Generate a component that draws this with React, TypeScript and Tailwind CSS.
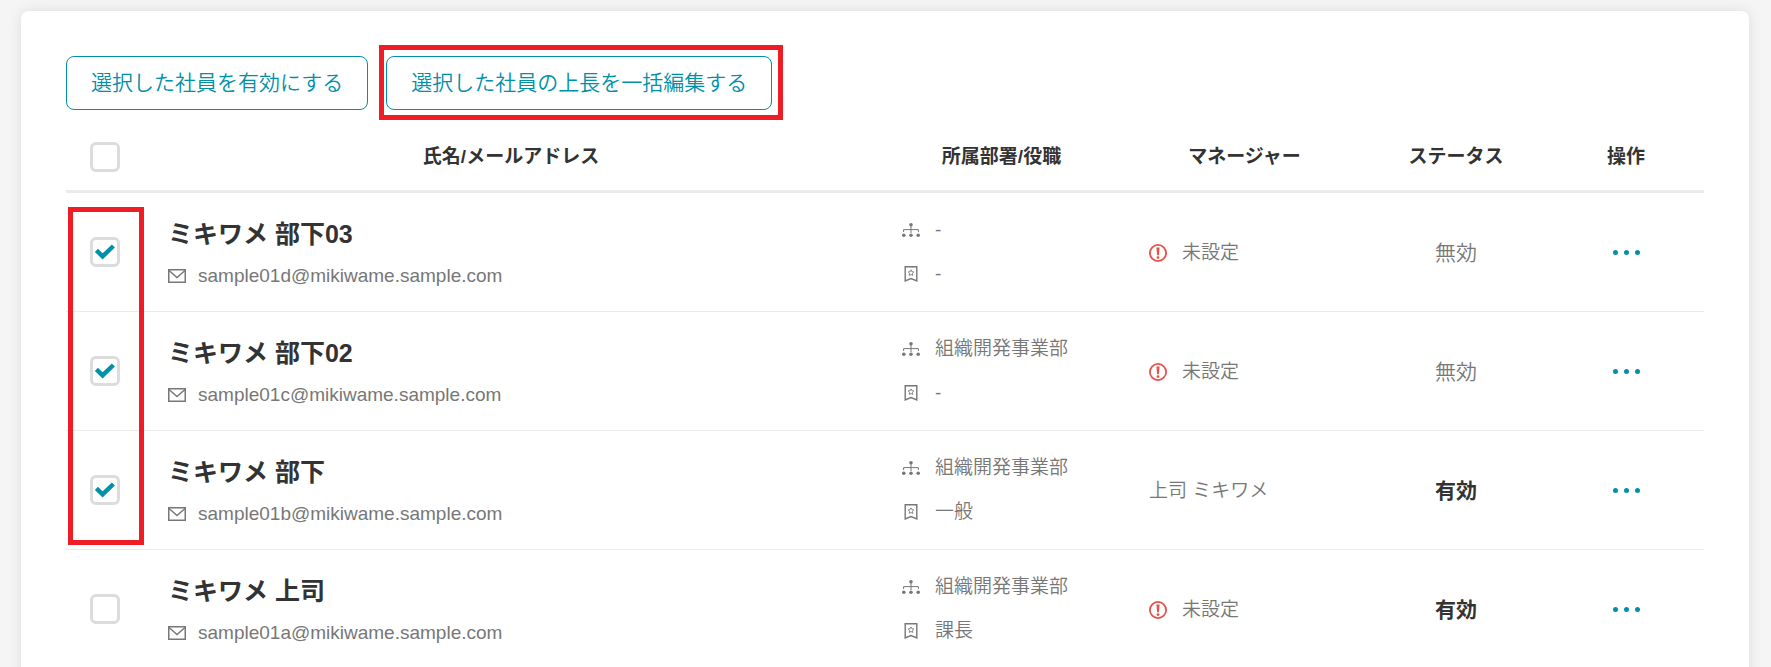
import React, { useState } from "react";

interface Employee {
  id: string;
  name: string;
  email: string;
  department: string;
  position: string;
  manager: string | null;
  active: boolean;
}

const employees: Employee[] = [
  {
    id: "01d",
    name: "ミキワメ 部下03",
    email: "sample01d@mikiwame.sample.com",
    department: "-",
    position: "-",
    manager: null,
    active: false,
  },
  {
    id: "01c",
    name: "ミキワメ 部下02",
    email: "sample01c@mikiwame.sample.com",
    department: "組織開発事業部",
    position: "-",
    manager: null,
    active: false,
  },
  {
    id: "01b",
    name: "ミキワメ 部下",
    email: "sample01b@mikiwame.sample.com",
    department: "組織開発事業部",
    position: "一般",
    manager: "上司 ミキワメ",
    active: true,
  },
  {
    id: "01a",
    name: "ミキワメ 上司",
    email: "sample01a@mikiwame.sample.com",
    department: "組織開発事業部",
    position: "課長",
    manager: null,
    active: true,
  },
];

const MailIcon = () => (
  <svg className="h-[14px] w-[18px] shrink-0" viewBox="0 0 18 14" fill="none" stroke="currentColor">
    <rect x="0.75" y="0.75" width="16.5" height="12.5" strokeWidth="1.5" />
    <path d="M1 1.5L9 8.5L17 1.5" strokeWidth="1.4" />
  </svg>
);

const DepartmentIcon = () => (
  <svg className="h-[18px] w-[18px] shrink-0" viewBox="0 0 18 18" fill="currentColor">
    <circle cx="9" cy="3.7" r="1.8" />
    <circle cx="1.8" cy="14.3" r="1.8" />
    <circle cx="9" cy="14.3" r="1.8" />
    <circle cx="16.2" cy="14.3" r="1.8" />
    <path d="M9 4V12M1.6 11V8.6H16.4V11" fill="none" stroke="currentColor" />
  </svg>
);

const PositionIcon = () => (
  <svg className="h-[18px] w-[18px] shrink-0" viewBox="0 0 18 18" fill="none" stroke="currentColor">
    <path d="M3.2 1.7H14.8V16L9 13.6L3.2 16Z" strokeWidth="1.4" />
    <path
      d="M9 4.9L9.9 6.7L11.8 7L10.4 8.4L10.8 10.4L9 9.5L7.2 10.4L7.6 8.4L6.2 7L8.1 6.7Z"
      strokeWidth="0.9"
    />
  </svg>
);

const AlertIcon = () => (
  <svg className="h-[18px] w-[18px] shrink-0 text-[#e5534b]" viewBox="0 0 18 18" fill="currentColor">
    <circle cx="9" cy="9" r="8.1" fill="none" stroke="currentColor" strokeWidth="1.8" />
    <path d="M7.4 3.6H10.6L9.9 11.2H8.1Z" />
    <circle cx="9" cy="13.6" r="1.4" />
  </svg>
);

interface CheckboxProps {
  label: string;
  checked: boolean;
  onChange: () => void;
}

const Checkbox: React.FC<CheckboxProps> = ({ label, checked, onChange }) => (
  <label className="relative block h-[30px] w-[30px] cursor-pointer">
    <input
      type="checkbox"
      aria-label={label}
      checked={checked}
      onChange={onChange}
      className="block h-[30px] w-[30px] cursor-pointer appearance-none rounded-md border-[3px] border-[#dcdcdc] bg-white"
    />
    {checked && (
      <svg
        className="pointer-events-none absolute inset-0 text-[#0090a8]"
        viewBox="0 0 30 30"
        fill="none"
        stroke="currentColor"
        strokeWidth="4.4"
      >
        <path d="M6.4 13.4L12.6 19.4L23.4 9" />
      </svg>
    )}
  </label>
);

const buttonClass =
  "rounded-lg border border-[#0090a8] bg-white px-6 h-[54px] text-[21px] font-[350] text-[#0090a8] cursor-pointer whitespace-nowrap";

export default function App() {
  const [selected, setSelected] = useState<string[]>(["01d", "01c", "01b"]);
  const allSelected = selected.length === employees.length;

  const toggle = (id: string) =>
    setSelected((prev) =>
      prev.includes(id) ? prev.filter((x) => x !== id) : [...prev, id]
    );

  return (
    <div
      lang="ja"
      className="h-screen overflow-hidden bg-[#f5f5f5] pt-[11px] pr-[22px] pl-[21px] font-['Liberation_Sans','Noto_Sans_CJK_JP',sans-serif] text-[#333]"
    >
      <main className="rounded-lg bg-white p-[45px] shadow-[0_0_14px_rgba(0,0,0,0.1)]">
        <div className="flex gap-[18px]">
          <button type="button" className={buttonClass}>
            選択した社員を有効にする
          </button>
          <div className="relative">
            <button type="button" className={buttonClass}>
              選択した社員の上長を一括編集する
            </button>
            <div className="pointer-events-none absolute -top-[11px] -right-[11px] -bottom-[10px] -left-[7px] border-[5px] border-[#ee1c25]" />
          </div>
        </div>

        <div className="relative mt-[14px]">
          <table className="w-full table-fixed border-separate border-spacing-0 text-[19px]">
            <colgroup>
              <col className="w-[78px]" />
              <col />
              <col className="w-[247px]" />
              <col className="w-[239px]" />
              <col className="w-[184px]" />
              <col className="w-[156px]" />
            </colgroup>
            <thead>
              <tr className="h-[69px] *:border-b-[3px] *:border-[#ebebeb]">
                <th className="px-6">
                  <Checkbox
                    label="すべて選択"
                    checked={allSelected}
                    onChange={() =>
                      setSelected(allSelected ? [] : employees.map((e) => e.id))
                    }
                  />
                </th>
                <th>氏名/メールアドレス</th>
                <th>所属部署/役職</th>
                <th>マネージャー</th>
                <th>ステータス</th>
                <th>操作</th>
              </tr>
            </thead>
            <tbody className="font-[350] text-[#777]">
              {employees.map((e) => (
                <tr key={e.id} className="h-[119px] *:border-b *:border-[#ebebeb]">
                  <td className="px-6">
                    <Checkbox
                      label={e.name}
                      checked={selected.includes(e.id)}
                      onChange={() => toggle(e.id)}
                    />
                  </td>
                  <td className="px-6 pt-1">
                    <div className="text-[25px] leading-8 font-bold text-[#333]">{e.name}</div>
                    <div className="mt-3 flex items-center gap-3 leading-7">
                      <MailIcon />
                      {e.email}
                    </div>
                  </td>
                  <td className="px-6">
                    <div className="flex items-center gap-[15px] leading-7">
                      <DepartmentIcon />
                      {e.department}
                    </div>
                    <div className="mt-4 flex items-center gap-[15px] leading-7">
                      <PositionIcon />
                      {e.position}
                    </div>
                  </td>
                  <td className="px-6 pt-[2px]">
                    {e.manager ?? (
                      <div className="flex items-center gap-[15px]">
                        <AlertIcon />
                        未設定
                      </div>
                    )}
                  </td>
                  <td className="pt-[2px] text-center text-[21px]">
                    {e.active ? (
                      <span className="font-bold text-[#333]">有効</span>
                    ) : (
                      "無効"
                    )}
                  </td>
                  <td>
                    <button
                      type="button"
                      aria-label="操作メニュー"
                      className="mx-auto flex h-8 cursor-pointer items-center gap-[6px]"
                    >
                      <span className="h-[5px] w-[5px] rounded-full bg-[#0090a8]" />
                      <span className="h-[5px] w-[5px] rounded-full bg-[#0090a8]" />
                      <span className="h-[5px] w-[5px] rounded-full bg-[#0090a8]" />
                    </button>
                  </td>
                </tr>
              ))}
            </tbody>
          </table>
          {/* highlight around the selected rows' checkboxes */}
          <div className="pointer-events-none absolute top-[83px] left-[2px] h-[338px] w-[76px] border-[5px] border-[#ee1c25]" />
        </div>
      </main>
    </div>
  );
}
